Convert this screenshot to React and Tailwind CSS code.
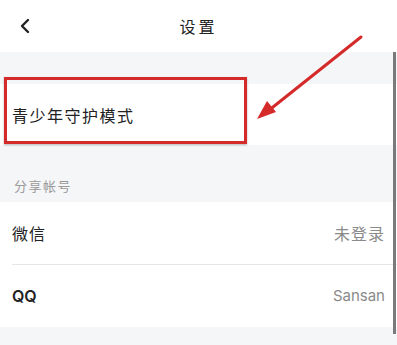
import React from 'react';

const CJK = { fontFamily: '"Noto Sans CJK SC", "Noto Sans", sans-serif' };

function Row({ label, value, latin }) {
  return (
    <div className="h-[62px] bg-white flex items-center justify-between pl-3 pr-[12px]">
      <span
        className={latin ? 'text-[16px] font-semibold text-[#222]' : 'text-[16px] text-[#222] tracking-[1px]'}
        style={latin ? { fontFamily: 'Inter, sans-serif' } : CJK}
      >
        {label}
      </span>
      <span
        className={latin ? 'text-[15px] text-[#8a8a8a]' : 'text-[16px] text-[#8a8a8a] tracking-[1px]'}
        style={latin ? { fontFamily: 'Inter, sans-serif' } : CJK}
      >
        {value}
      </span>
    </div>
  );
}

export default function App() {
  return (
    <div className="relative w-[397px] h-[345px] overflow-hidden bg-[#f5f6f8]" style={CJK}>
      {/* header */}
      <div className="h-[52px] bg-white flex items-center relative">
        <svg className="ml-[19px]" width="12" height="16" viewBox="0 0 12 16">
          <path d="M9 2 L3 8 L9 14" fill="none" stroke="#222" strokeWidth="2.4" strokeLinecap="round" strokeLinejoin="round" />
        </svg>
        <span className="absolute left-1/2 -translate-x-1/2 text-[16px] text-[#222] tracking-[3px]">设置</span>
      </div>

      <div className="h-[32px]" />

      {/* youth mode row */}
      <div className="h-[61px] bg-white flex items-center pl-3">
        <span className="text-[16px] text-[#222] tracking-[1.5px]">青少年守护模式</span>
      </div>

      {/* section label */}
      <div className="h-[57px] flex items-end pl-[14px] pb-[7px]">
        <span className="text-[13px] text-[#9a9a9a] tracking-[1.5px]">分享帐号</span>
      </div>

      <Row label="微信" value="未登录" />
      <div className="bg-white pl-3">
        <div className="h-px bg-[#e6e6e6]" />
      </div>
      <Row label="QQ" value="Sansan" latin />

      {/* red highlight box */}
      <div className="absolute left-[4px] top-[77px] w-[243px] h-[67px] border-[3px] border-[#d42a2a] shadow-[0_1px_2px_rgba(0,0,0,0.3)]" />

      {/* arrow */}
      <svg className="absolute left-0 top-0" width="397" height="345" viewBox="0 0 397 345">
        <line x1="361" y1="37" x2="268" y2="111" stroke="#d42a2a" strokeWidth="3" strokeLinecap="round" />
        <polygon points="257,119 267,101 276,112" fill="#d42a2a" />
      </svg>

      {/* scrollbar */}
      <div className="absolute left-[393px] top-[52px] w-[3px] h-[282px] bg-[#7a7a7a]" />
    </div>
  );
}
